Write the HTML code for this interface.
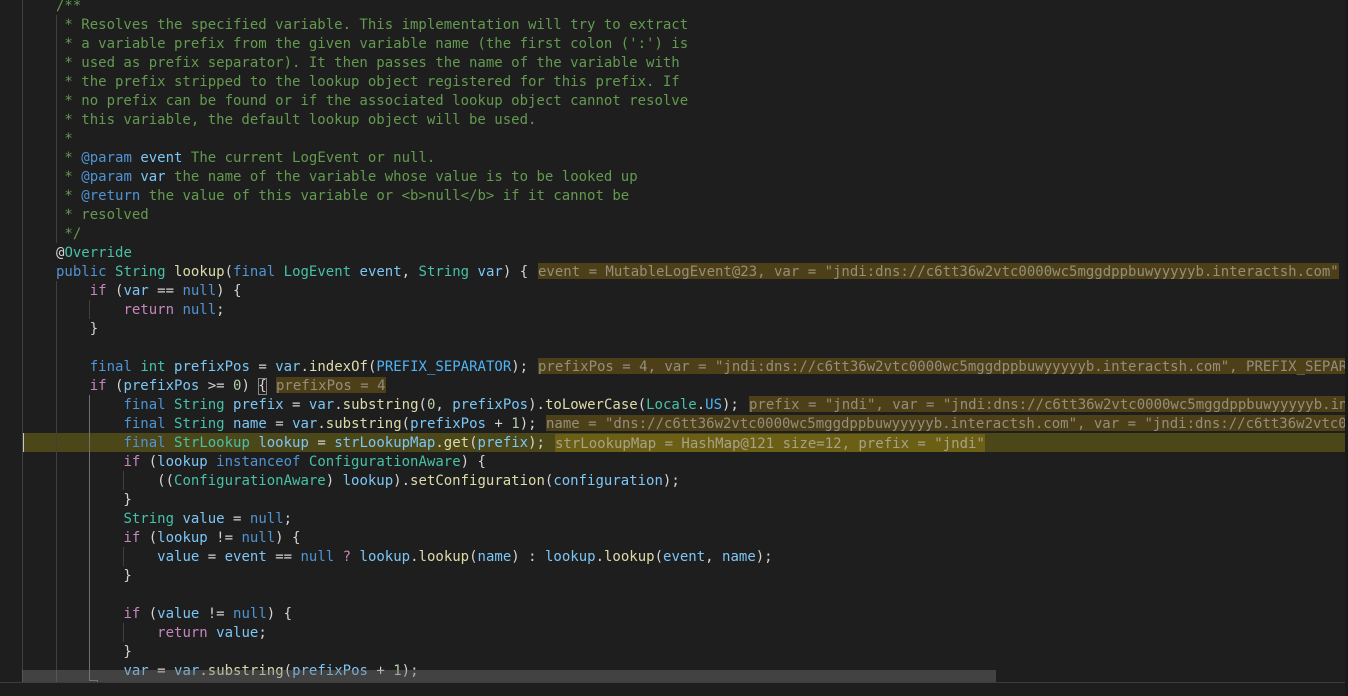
<!DOCTYPE html>
<html><head><meta charset="utf-8"><style>
html,body{margin:0;padding:0;background:#1e1e1e;width:1348px;height:696px;overflow:hidden}
#ed{position:absolute;left:0;top:0;width:1345px;height:682px;overflow:hidden;background:#1e1e1e}
.l{position:absolute;left:56px;height:19px;font:14px/19px "DejaVu Sans Mono",monospace;white-space:pre;color:#d4d4d4;margin-top:1px}
.g{position:absolute;width:1px;background:#404040}
.c{color:#639a50}.k{color:#4f94d4}.p{color:#c586c0}.t{color:#45c2a8}.v{color:#7cc6f6}.f{color:#dcdcaa}.n{color:#b5cea8}
.h{position:absolute;height:16px;font:14px/18px "DejaVu Sans Mono",monospace;white-space:pre;color:#938f7c;background:#4d3f18}
</style></head><body>
<div id="ed">
<div style="position:absolute;left:22px;top:433px;width:1323px;height:19px;background:#4b4718"></div>
<div style="position:absolute;left:22px;top:433px;width:2px;height:19px;background:#c5c5c5"></div>
<div class="g" style="left:22px;top:0;height:682px"></div>
<div class="g" style="left:56px;top:15px;height:228px"></div>
<div class="g" style="left:56px;top:281px;height:401px"></div>
<div class="g" style="left:89px;top:300px;height:19px"></div>
<div class="g" style="left:89px;top:395px;height:286px;background:#707070"></div>
<div style="position:absolute;left:89px;top:680px;width:9px;height:1px;background:#707070"></div>
<div style="position:absolute;left:97px;top:680px;width:1px;height:2px;background:#707070"></div>
<div class="g" style="left:123px;top:471px;height:19px"></div>
<div class="g" style="left:123px;top:547px;height:19px"></div>
<div class="g" style="left:123px;top:623px;height:19px"></div>
<div style="position:absolute;left:258px;top:378px;width:7px;height:15px;border:1px solid #888"></div>

<div class="h" style="left:538px;top:263px;width:801px">event = MutableLogEvent@23, var = "jndi:dns://c6tt36w2vtc0000wc5mggdppbuwyyyyyb.interactsh.com"</div>
<div class="h" style="left:538px;top:358px;width:807px">prefixPos = 4, var = "jndi:dns://c6tt36w2vtc0000wc5mggdppbuwyyyyyb.interactsh.com", PREFIX_SEPARATOR = ":"</div>
<div class="h" style="left:276px;top:377px;width:110px">prefixPos = 4</div>
<div class="h" style="left:749px;top:396px;width:596px">prefix = "jndi", var = "jndi:dns://c6tt36w2vtc0000wc5mggdppbuwyyyyyb.interactsh.com"</div>
<div class="h" style="left:546px;top:415px;width:799px">name = "dns://c6tt36w2vtc0000wc5mggdppbuwyyyyyb.interactsh.com", var = "jndi:dns://c6tt36w2vtc0000wc5"</div>
<div class="h" style="left:555px;top:434px;width:430px;height:18px;line-height:20px;background:#6b5f16;color:#a8a285">strLookupMap = HashMap@121 size=12, prefix = "jndi"</div>

<div class="l c" style="top:-4px">/**</div>
<div class="l c" style="top:15px"> * Resolves the specified variable. This implementation will try to extract</div>
<div class="l c" style="top:34px"> * a variable prefix from the given variable name (the first colon (':') is</div>
<div class="l c" style="top:53px"> * used as prefix separator). It then passes the name of the variable with</div>
<div class="l c" style="top:72px"> * the prefix stripped to the lookup object registered for this prefix. If</div>
<div class="l c" style="top:91px"> * no prefix can be found or if the associated lookup object cannot resolve</div>
<div class="l c" style="top:110px"> * this variable, the default lookup object will be used.</div>
<div class="l c" style="top:129px"> *</div>
<div class="l c" style="top:148px"> * <span class="k">@param</span> <span class="v">event</span> The current LogEvent or null.</div>
<div class="l c" style="top:167px"> * <span class="k">@param</span> <span class="v">var</span> the name of the variable whose value is to be looked up</div>
<div class="l c" style="top:186px"> * <span class="k">@return</span> the value of this variable or &lt;b&gt;null&lt;/b&gt; if it cannot be</div>
<div class="l c" style="top:205px"> * resolved</div>
<div class="l c" style="top:224px"> */</div>
<div class="l" style="top:243px">@<span class="t">Override</span></div>
<div class="l" style="top:262px"><span class="k">public</span> <span class="t">String</span> <span class="f">lookup</span>(<span class="k">final</span> <span class="t">LogEvent</span> <span class="v">event</span>, <span class="t">String</span> <span class="v">var</span>) {</div>
<div class="l" style="top:281px">    <span class="p">if</span> (<span class="v">var</span> == <span class="k">null</span>) {</div>
<div class="l" style="top:300px">        <span class="p">return</span> <span class="k">null</span>;</div>
<div class="l" style="top:319px">    }</div>
<div class="l" style="top:357px">    <span class="k">final</span> <span class="t">int</span> <span class="v">prefixPos</span> = <span class="v">var</span>.<span class="f">indexOf</span>(<span class="k" style="color:#4fb4f5">PREFIX_SEPARATOR</span>);</div>
<div class="l" style="top:376px">    <span class="p">if</span> (<span class="v">prefixPos</span> &gt;= <span class="n">0</span>) {</div>
<div class="l" style="top:395px">        <span class="k">final</span> <span class="t">String</span> <span class="v">prefix</span> = <span class="v">var</span>.<span class="f">substring</span>(<span class="n">0</span>, <span class="v">prefixPos</span>).<span class="f">toLowerCase</span>(<span class="t">Locale</span>.<span class="k" style="color:#4fb4f5">US</span>);</div>
<div class="l" style="top:414px">        <span class="k">final</span> <span class="t">String</span> <span class="v">name</span> = <span class="v">var</span>.<span class="f">substring</span>(<span class="v">prefixPos</span> + <span class="n">1</span>);</div>
<div class="l" style="top:433px">        <span class="k">final</span> <span class="t">StrLookup</span> <span class="v">lookup</span> = <span class="v">strLookupMap</span>.<span class="f">get</span>(<span class="v">prefix</span>);</div>
<div class="l" style="top:452px">        <span class="p">if</span> (<span class="v">lookup</span> <span class="k">instanceof</span> <span class="t">ConfigurationAware</span>) {</div>
<div class="l" style="top:471px">            ((<span class="t">ConfigurationAware</span>) <span class="v">lookup</span>).<span class="f">setConfiguration</span>(<span class="v">configuration</span>);</div>
<div class="l" style="top:490px">        }</div>
<div class="l" style="top:509px">        <span class="t">String</span> <span class="v">value</span> = <span class="k">null</span>;</div>
<div class="l" style="top:528px">        <span class="p">if</span> (<span class="v">lookup</span> != <span class="k">null</span>) {</div>
<div class="l" style="top:547px">            <span class="v">value</span> = <span class="v">event</span> == <span class="k">null</span> <span class="p">?</span> <span class="v">lookup</span>.<span class="f">lookup</span>(<span class="v">name</span>) : <span class="v">lookup</span>.<span class="f">lookup</span>(<span class="v">event</span>, <span class="v">name</span>);</div>
<div class="l" style="top:566px">        }</div>
<div class="l" style="top:604px">        <span class="p">if</span> (<span class="v">value</span> != <span class="k">null</span>) {</div>
<div class="l" style="top:623px">            <span class="p">return</span> <span class="v">value</span>;</div>
<div class="l" style="top:642px">        }</div>
<div class="l" style="top:661px">        <span class="v">var</span> = <span class="v">var</span>.<span class="f">substring</span>(<span class="v">prefixPos</span> + <span class="n">1</span>);</div>

<div style="position:absolute;left:22px;top:670px;width:974px;height:12px;background:rgba(121,121,121,.4)"></div>
</div>
<div style="position:absolute;left:0;top:682px;width:1345px;height:1px;background:#3c3c3c"></div>
<div style="position:absolute;left:1345px;top:0;width:3px;height:696px;background:#191919"></div>
</body></html>
